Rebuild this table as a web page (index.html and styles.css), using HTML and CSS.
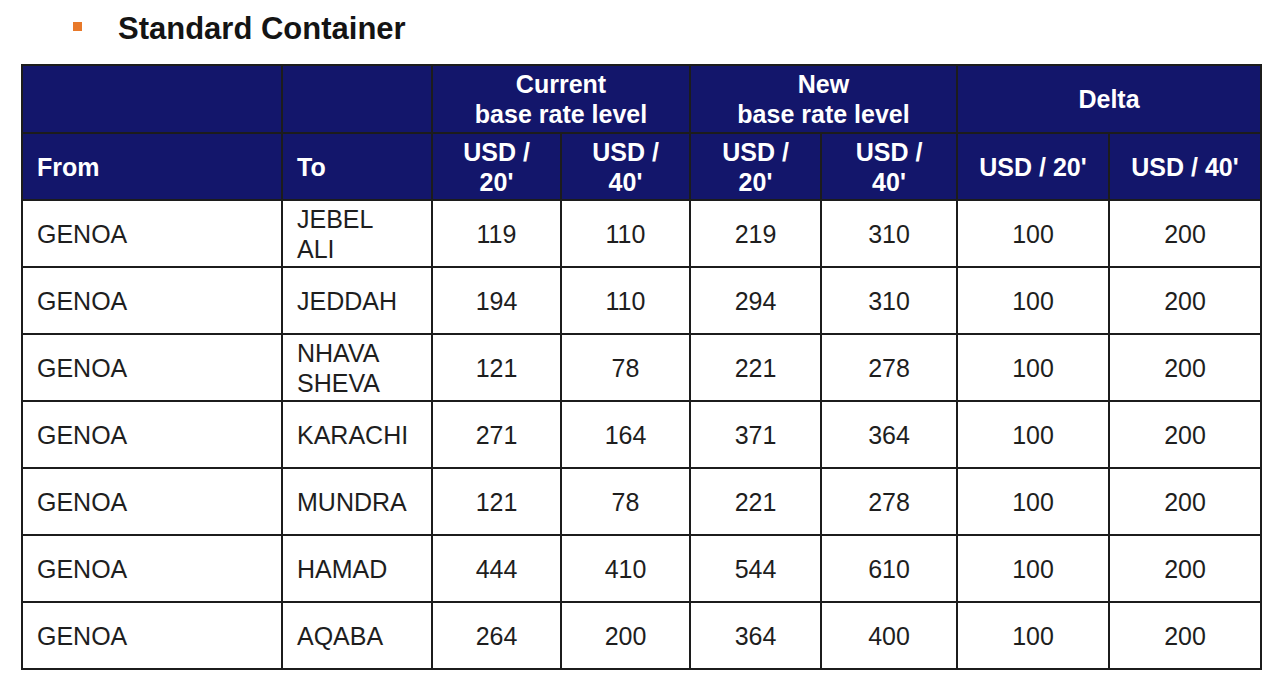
FILE: index.html
```html
<!DOCTYPE html>
<html>
<head>
<meta charset="utf-8">
<link rel="stylesheet" href="styles.css">
</head>
<body>
<div class="title-row">
  <span class="bullet"></span>
  <h1 class="title">Standard Container</h1>
</div>
<table class="rates">
  <colgroup>
    <col class="c-from"><col class="c-to"><col class="c-n1"><col class="c-n2"><col class="c-n3"><col class="c-n4"><col class="c-d1"><col class="c-d2">
  </colgroup>
  <thead>
    <tr class="h1">
      <th></th>
      <th></th>
      <th colspan="2">Current<br>base rate level</th>
      <th colspan="2">New<br>base rate level</th>
      <th colspan="2">Delta</th>
    </tr>
    <tr class="h2">
      <th class="left">From</th>
      <th class="left">To</th>
      <th>USD /<br>20'</th>
      <th>USD /<br>40'</th>
      <th>USD /<br>20'</th>
      <th>USD /<br>40'</th>
      <th>USD / 20'</th>
      <th>USD / 40'</th>
    </tr>
  </thead>
  <tbody>
    <tr><td class="left">GENOA</td><td class="left">JEBEL<br>ALI</td><td>119</td><td>110</td><td>219</td><td>310</td><td>100</td><td>200</td></tr>
    <tr><td class="left">GENOA</td><td class="left">JEDDAH</td><td>194</td><td>110</td><td>294</td><td>310</td><td>100</td><td>200</td></tr>
    <tr><td class="left">GENOA</td><td class="left">NHAVA<br>SHEVA</td><td>121</td><td>78</td><td>221</td><td>278</td><td>100</td><td>200</td></tr>
    <tr><td class="left">GENOA</td><td class="left">KARACHI</td><td>271</td><td>164</td><td>371</td><td>364</td><td>100</td><td>200</td></tr>
    <tr><td class="left">GENOA</td><td class="left">MUNDRA</td><td>121</td><td>78</td><td>221</td><td>278</td><td>100</td><td>200</td></tr>
    <tr><td class="left">GENOA</td><td class="left">HAMAD</td><td>444</td><td>410</td><td>544</td><td>610</td><td>100</td><td>200</td></tr>
    <tr><td class="left">GENOA</td><td class="left">AQABA</td><td>264</td><td>200</td><td>364</td><td>400</td><td>100</td><td>200</td></tr>
  </tbody>
</table>
</body>
</html>
```

FILE: styles.css
```css
html, body {
  margin: 0;
  padding: 0;
  background: #ffffff;
  font-family: "Liberation Sans", Arial, sans-serif;
}

.title-row {
  display: flex;
  align-items: center;
  height: 57px;
  padding-left: 73px;
}

.bullet {
  width: 9px;
  height: 9px;
  background: #e8792a;
  margin-right: 36px;
  margin-top: -5px;
}

.title {
  margin: 0;
  font-size: 31px;
  font-weight: bold;
  color: #141414;
  line-height: 1;
}

.rates {
  margin-left: 21px;
  margin-top: 7px;
  width: 1239px;
  border-collapse: collapse;
  table-layout: fixed;
}

.c-from { width: 260px; }
.c-to { width: 150px; }
.c-n1 { width: 129px; }
.c-n2 { width: 129px; }
.c-n3 { width: 131px; }
.c-n4 { width: 136px; }
.c-d1 { width: 152px; }
.c-d2 { width: 152px; }

.rates th,
.rates td {
  border: 2px solid #1c1c1c;
  text-align: center;
  vertical-align: middle;
  padding: 0 6px;
  font-size: 25px;
  line-height: 30px;
}

.rates th {
  background: #13166b;
  color: #ffffff;
  font-weight: bold;
}

.rates .h1 th {
  height: 66px;
}

.rates .h2 th {
  height: 65px;
}

.rates td {
  color: #1e1e1e;
  height: 65px;
  line-height: 30px;
}

.rates .left {
  text-align: left;
  padding-left: 14px;
}
```
